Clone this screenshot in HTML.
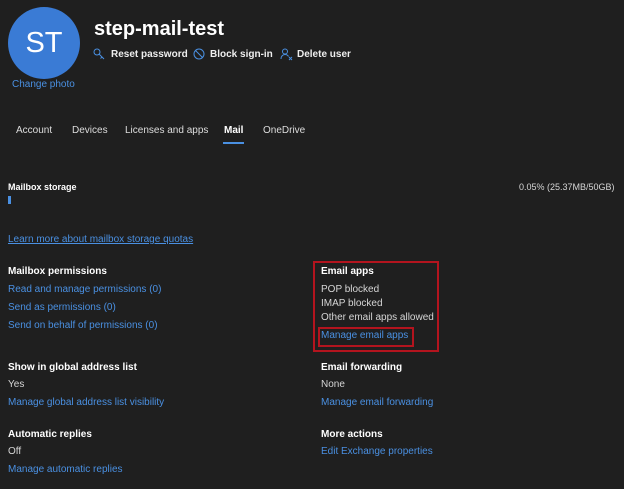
<!DOCTYPE html>
<html><head><style>
body{margin:0;width:624px;height:489px;background:#1f1f1f;font-family:"Liberation Sans",sans-serif;color:#d6d6d6;position:relative;overflow:hidden}
.a{position:absolute;white-space:nowrap;font-size:10px}
.b{font-weight:bold;color:#fff}
.l{color:#4a90e2}
</style></head><body>
<div style="position:absolute;left:8px;top:7px;width:72px;height:72px;border-radius:50%;background:#3a7bd5;color:#fff;font-size:29px;text-align:center;line-height:72px">ST</div>
<div class="a l" style="left:12px;top:79px;font-size:10px">Change photo</div>
<div class="a b" style="left:94px;top:18px;font-size:20px">step-mail-test</div>
<svg class="a" style="left:93px;top:48px" width="12" height="13" viewBox="0 0 12 13"><circle cx="4" cy="4" r="3" fill="none" stroke="#4a90e2"/><path d="M6 6l5 5M9 9l-1.5 1.5" stroke="#4a90e2" fill="none"/></svg>
<div class="a b" style="left:111px;top:49px;font-size:10px;color:#eee">Reset password</div>
<svg class="a" style="left:193px;top:48px" width="12" height="12"><circle cx="6" cy="6" r="5" fill="none" stroke="#4a90e2"/><path d="M2.5 2.5l7 7" stroke="#4a90e2"/></svg>
<div class="a b" style="left:210px;top:49px;color:#eee">Block sign-in</div>
<svg class="a" style="left:280px;top:48px" width="13" height="13"><circle cx="5" cy="3.5" r="2.5" fill="none" stroke="#4a90e2"/><path d="M1 11c0-3 2-4.5 4-4.5s3 1 3.5 2M9 9l3 3M12 9l-3 3" stroke="#4a90e2" fill="none"/></svg>
<div class="a b" style="left:297px;top:49px;color:#eee">Delete user</div>
<div class="a" style="left:16px;top:125px;color:#ddd">Account</div>
<div class="a" style="left:72px;top:125px;color:#ddd">Devices</div>
<div class="a" style="left:125px;top:125px;color:#ddd">Licenses and apps</div>
<div class="a b" style="left:224px;top:125px">Mail</div>
<div style="position:absolute;left:223px;top:142px;width:21px;height:2px;background:#4a90e2"></div>
<div class="a" style="left:263px;top:125px;color:#ddd">OneDrive</div>
<div class="a b" style="left:8px;top:182px;font-size:9px">Mailbox storage</div>
<div class="a" style="left:519px;top:182px;font-size:9px">0.05% (25.37MB/50GB)</div>
<div style="position:absolute;left:8px;top:196px;width:3px;height:8px;background:#4a90e2"></div>
<div class="a l" style="left:8px;top:234px;text-decoration:underline">Learn more about mailbox storage quotas</div>
<div class="a b" style="left:8px;top:266px">Mailbox permissions</div>
<div class="a l" style="left:8px;top:284px">Read and manage permissions (0)</div>
<div class="a l" style="left:8px;top:302px">Send as permissions (0)</div>
<div class="a l" style="left:8px;top:320px">Send on behalf of permissions (0)</div>
<div style="position:absolute;left:313px;top:261px;width:122px;height:87px;border:2px solid #b3141e"></div>
<div style="position:absolute;left:318px;top:327px;width:92px;height:16px;border:2px solid #b3141e"></div>
<div class="a b" style="left:321px;top:266px">Email apps</div>
<div class="a" style="left:321px;top:284px">POP blocked</div>
<div class="a" style="left:321px;top:298px">IMAP blocked</div>
<div class="a" style="left:321px;top:312px">Other email apps allowed</div>
<div class="a l" style="left:321px;top:330px">Manage email apps</div>
<div class="a b" style="left:8px;top:362px">Show in global address list</div>
<div class="a" style="left:8px;top:379px">Yes</div>
<div class="a l" style="left:8px;top:397px">Manage global address list visibility</div>
<div class="a b" style="left:321px;top:362px">Email forwarding</div>
<div class="a" style="left:321px;top:379px">None</div>
<div class="a l" style="left:321px;top:397px">Manage email forwarding</div>
<div class="a b" style="left:8px;top:429px">Automatic replies</div>
<div class="a" style="left:8px;top:446px">Off</div>
<div class="a l" style="left:8px;top:464px">Manage automatic replies</div>
<div class="a b" style="left:321px;top:429px">More actions</div>
<div class="a l" style="left:321px;top:446px">Edit Exchange properties</div>
</body></html>
